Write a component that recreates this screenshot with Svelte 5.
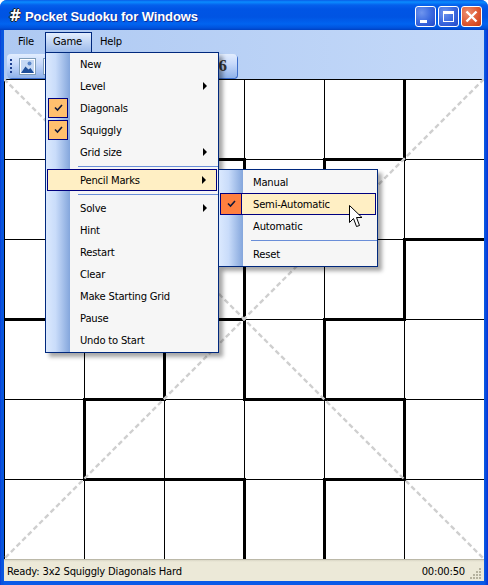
<script lang="ts">
  const cell = 80;
  const size = 480;

  // thick segments of the squiggly regions: [x1, y1, x2, y2] in grid units
  const thick = [
    [0, 3, 3, 3], [4, 3, 4, 4], [3, 3, 3, 4], [2, 3, 2, 4],
    [1, 4, 1, 5], [1, 4, 2, 4], [3, 4, 5, 4], [1, 5, 3, 5], [4, 5, 5, 5],
    [3, 5, 3, 6], [4, 5, 4, 6], [5, 4, 5, 5], [4, 3, 5, 3], [5, 2, 5, 3],
    [5, 2, 6, 2], [4, 1, 5, 1], [5, 0, 5, 1], [4, 1, 4, 2], [3, 1, 3, 3],
    [2, 1, 3, 1]
  ];
  const steps = [0, 1, 2, 3, 4, 5, 6];

  const gameItems = [
    { label: 'New' },
    { label: 'Level', sub: true },
    { label: 'Diagonals', checked: true },
    { label: 'Squiggly', checked: true },
    { label: 'Grid size', sub: true },
    { sep: true },
    { label: 'Pencil Marks', sub: true, active: true },
    { sep: true },
    { label: 'Solve', sub: true },
    { label: 'Hint' },
    { label: 'Restart' },
    { label: 'Clear' },
    { label: 'Make Starting Grid' },
    { label: 'Pause' },
    { label: 'Undo to Start' }
  ];

  const pencilItems = [
    { label: 'Manual' },
    { label: 'Semi-Automatic', checked: true, active: true },
    { label: 'Automatic' },
    { sep: true },
    { label: 'Reset' }
  ];
</script>

<div class="window">
  <header class="titlebar">
    <span class="app-icon">#</span>
    <span class="app-title">Pocket Sudoku for Windows</span>
    <div class="controls">
      <button class="ctl" aria-label="Minimize"><span class="min-glyph"></span></button>
      <button class="ctl" aria-label="Maximize"><span class="max-glyph"></span></button>
      <button class="ctl ctl--close" aria-label="Close">
        <svg width="13" height="13" viewBox="0 0 13 13"><path d="M1.5 1.5l10 10M11.5 1.5l-10 10" stroke="#fff" stroke-width="2.4" /></svg>
      </button>
    </div>
  </header>

  <div class="client">
    <div class="bands">
      <nav class="menubar">
        <span class="top-item">File</span>
        <span class="top-item top-item--open">Game</span>
        <span class="top-item">Help</span>
      </nav>
      <div class="toolbar">
        <span class="grip"></span>
        <span class="tool-pic">
          <svg width="17" height="17" viewBox="0 0 17 17">
            <rect x="0.5" y="0.5" width="16" height="16" fill="#fff" stroke="#7f9db9" />
            <rect x="2" y="2" width="13" height="13" fill="#c5d8f4" />
            <circle cx="10.5" cy="5.5" r="2" fill="#5b86c8" />
            <path d="M2 15l4.5-6.5 3 3 2-1.500 3.500 5z" fill="#1f4f9a" />
          </svg>
        </span>
        <span class="tool-pic">
          <svg width="17" height="17" viewBox="0 0 17 17"><rect x="0.5" y="0.5" width="16" height="16" fill="#fff" stroke="#7f9db9" /></svg>
        </span>
        <span class="tool-num">6</span>
      </div>
    </div>

    <svg class="board" width={size} height={size + 1} viewBox="0 0 {size} {size + 1}">
      <rect width={size} height={size + 1} fill="#fff" />
      {#each steps as n}
        <line x1={n * cell + 0.5} y1="0" x2={n * cell + 0.5} y2={size} stroke="#000" />
        <line x1="0" y1={n * cell + 0.5} x2={size} y2={n * cell + 0.5} stroke="#000" />
      {/each}
      {#each thick as t}
        <line
          x1={t[0] * cell + 0.5 - (t[1] === t[3] ? 1.5 : 0)}
          y1={t[1] * cell + 0.5 - (t[0] === t[2] ? 1.5 : 0)}
          x2={t[2] * cell + 0.5 + (t[1] === t[3] ? 1.5 : 0)}
          y2={t[3] * cell + 0.5 + (t[0] === t[2] ? 1.5 : 0)}
          stroke="#000"
          stroke-width="3"
        />
      {/each}
      <line x1="0" y1="0" x2={size} y2={size} class="diag" />
      <line x1={size} y1="0" x2="0" y2={size} class="diag" />
    </svg>

    <footer class="statusbar">
      <span>Ready: 3x2 Squiggly Diagonals Hard</span>
      <span class="timer">00:00:50</span>
      <svg class="size-grip" width="12" height="12" viewBox="0 0 12 12" fill="#b5b29f">
        <rect x="9" y="1" width="2" height="2" />
        <rect x="6" y="4" width="2" height="2" /><rect x="9" y="4" width="2" height="2" />
        <rect x="3" y="7" width="2" height="2" /><rect x="6" y="7" width="2" height="2" /><rect x="9" y="7" width="2" height="2" />
        <rect x="0" y="10" width="2" height="2" /><rect x="3" y="10" width="2" height="2" /><rect x="6" y="10" width="2" height="2" /><rect x="9" y="10" width="2" height="2" />
      </svg>
    </footer>
  </div>

  <ul class="menu menu--game">
    {#each gameItems as item}
      {#if item.sep}
        <li class="sep"></li>
      {:else}
        <li class="item" class:active={item.active}>
          {#if item.checked}
            <span class="check"><svg width="9" height="8" viewBox="0 0 9 8"><path d="M1 3.500l2.500 2.500 4.500-5" fill="none" stroke="#10183a" stroke-width="1.600" /></svg></span>
          {/if}
          <span class="label">{item.label}</span>
          {#if item.sub}<span class="arrow"></span>{/if}
        </li>
      {/if}
    {/each}
  </ul>

  <ul class="menu menu--pencil">
    {#each pencilItems as item}
      {#if item.sep}
        <li class="sep"></li>
      {:else}
        <li class="item" class:active={item.active}>
          {#if item.checked}
            <span class="check check--on"><svg width="9" height="8" viewBox="0 0 9 8"><path d="M1 3.500l2.500 2.500 4.500-5" fill="none" stroke="#10183a" stroke-width="1.600" /></svg></span>
          {/if}
          <span class="label">{item.label}</span>
        </li>
      {/if}
    {/each}
  </ul>

  <svg class="cursor" width="13" height="23" viewBox="0 0 13 23">
    <path d="M0.500 0.500v17l4-4 3 8 3-1-3-8h5.500z" fill="#fff" stroke="#000" />
  </svg>
</div>

<style>
  :global(body) {
    background: #fff;
  }

  .window {
    position: relative;
    width: 488px;
    height: 585px;
    box-sizing: border-box;
    display: flex;
    flex-direction: column;
    overflow: hidden;
    border-radius: 7px 7px 0 0;
    background: linear-gradient(90deg, #0831d9 0, #0855dd 1px, #0855dd 3px, #0a5ae8 4px, #0a5ae8 484px, #0855dd 485px, #0831d9 488px);
    font-family: "DejaVu Sans", sans-serif;
    font-size: 10px;
    letter-spacing: -0.2px;
    color: #000;
  }

  .titlebar {
    height: 30px;
    flex-shrink: 0;
    display: flex;
    align-items: center;
    padding: 2px 6px 0 9px;
    box-sizing: border-box;
    background: linear-gradient(180deg, #0a5ce6 0, #0a8cff 2px, #0560ec 5px, #0055e5 9px, #0054e3 17px, #0164f0 24px, #0052dc 28px, #0041c0 30px);
  }

  .app-icon {
    width: 16px;
    font: 700 15px "DejaVu Sans", sans-serif;
    letter-spacing: 0;
    color: #fff;
    text-shadow: 1px 0 0 #222, -1px 0 0 #222, 0 1px 0 #222, 0 -1px 0 #222;
  }

  .app-title {
    flex: 1;
    padding-top: 1px;
    font: 700 13px "Liberation Sans", sans-serif;
    letter-spacing: -0.1px;
    color: #fff;
    text-shadow: 1px 1px 0 #0f2f9a;
    white-space: nowrap;
  }

  .controls {
    display: flex;
    gap: 2px;
  }

  .ctl {
    width: 21px;
    height: 21px;
    box-sizing: border-box;
    padding: 0;
    display: flex;
    align-items: center;
    justify-content: center;
    border: 1px solid #fff;
    border-radius: 3px;
    background: radial-gradient(circle at 30% 30%, #6f95ee 0, #3c6be0 50%, #2348c8 100%);
    position: relative;
  }

  .ctl--close {
    background: radial-gradient(circle at 30% 30%, #eb8f72 0, #df5a34 55%, #c53a14 100%);
  }

  .min-glyph {
    width: 7px;
    height: 3px;
    background: #fff;
    align-self: flex-end;
    margin: 0 4px 3px 0;
  }

  .max-glyph {
    width: 11px;
    height: 11px;
    box-sizing: border-box;
    border: 1px solid #fff;
    border-top-width: 3px;
  }

  .client {
    flex: 1;
    min-height: 0;
    display: flex;
    flex-direction: column;
    margin: 0 4px 4px;
  }

  .bands {
    height: 49px;
    flex-shrink: 0;
    display: flex;
    flex-direction: column;
    background: linear-gradient(90deg, #aec9f2, #c4d9f9);
  }

  .menubar {
    height: 22px;
    display: flex;
    padding: 2px 0 0 2px;
    box-sizing: border-box;
  }

  .top-item {
    height: 20px;
    box-sizing: border-box;
    padding: 0 7px;
    line-height: 18px;
    border: 1px solid transparent;
  }

  .top-item:first-child {
    width: 39px;
    padding: 0 0 0 11px;
  }

  .top-item--open {
    width: 47px;
    padding: 0 0 0 7px;
    border-color: #00287d;
    border-bottom: none;
    background: linear-gradient(180deg, #e3eefe, #9cbaea);
  }

  .top-item--open + .top-item {
    padding-left: 7px;
  }

  .toolbar {
    width: 230px;
    height: 24px;
    margin: 2px 0 0 3px;
    display: flex;
    align-items: center;
    padding-left: 3px;
    box-sizing: border-box;
    border-radius: 4px;
    background: linear-gradient(180deg, #e2edfe 0, #c8dafb 40%, #8fb2ea 100%);
    box-shadow: 1px 1px 0 #3d6ecb;
  }

  .grip {
    width: 2px;
    height: 14px;
    background: repeating-linear-gradient(180deg, #1d3f8f 0 2px, transparent 2px 4px);
    margin-right: 7px;
  }

  .tool-pic {
    width: 17px;
    height: 17px;
    margin-right: 7px;
  }

  .tool-num {
    margin-left: auto;
    margin-right: 10px;
    font: 700 17px "Liberation Serif", serif;
    letter-spacing: 0;
    color: #333;
  }

  .board {
    display: block;
    flex-shrink: 0;
    margin-bottom: -1px;
  }

  .diag {
    stroke: #cfcfcf;
    stroke-width: 2.4;
    stroke-dasharray: 5 3;
  }

  .statusbar {
    flex: 1;
    position: relative;
    display: flex;
    align-items: center;
    justify-content: space-between;
    padding: 2px 18px 0 3px;
    background: linear-gradient(180deg, #9d9a8a 0, #dad7c6 1px, #ece9d8 3px, #ece9d8 100%);
  }

  .timer {
    margin-right: 1px;
  }

  .size-grip {
    position: absolute;
    right: 2px;
    bottom: 2px;
  }

  .menu {
    position: absolute;
    list-style: none;
    margin: 0;
    padding: 0;
    box-sizing: border-box;
    border: 1px solid #00287d;
    background-color: #f6f6f6;
    background-image: linear-gradient(90deg, #dbe9fe 0, #c9dcfa 40%, #84a6dc 100%);
    background-repeat: no-repeat;
    background-size: 24px 100%;
    box-shadow: 4px 4px 4px rgba(0, 0, 0, 0.35);
  }

  .menu--game {
    left: 45px;
    top: 52px;
    width: 174px;
    height: 301px;
  }

  .menu--pencil {
    left: 218px;
    top: 169px;
    width: 160px;
    height: 98px;
    padding-top: 1px;
  }

  .item {
    position: relative;
    height: 22px;
    display: flex;
    align-items: center;
    box-sizing: border-box;
    padding-left: 34px;
    white-space: nowrap;
  }

  .item.active {
    margin: 0 1px;
    padding-left: 32px;
    border: 1px solid #000080;
    background: #ffefc4;
  }

  .check {
    position: absolute;
    left: 2px;
    top: 1px;
    width: 20px;
    height: 20px;
    box-sizing: border-box;
    display: flex;
    align-items: center;
    justify-content: center;
    border: 1px solid #000080;
    background: #ffc06e;
  }

  .check--on {
    left: -1px;
    top: -1px;
    width: 22px;
    height: 22px;
    background: #ff7f3f;
  }

  .arrow {
    position: absolute;
    right: 11px;
    top: 7px;
    border-left: 4px solid #000;
    border-top: 4px solid transparent;
    border-bottom: 4px solid transparent;
  }

  .item.active .arrow {
    top: 6px;
    right: 10px;
  }

  .sep {
    height: 6px;
    position: relative;
    box-sizing: border-box;
    padding-top: 2px;
    margin-left: 32px;
    background: linear-gradient(#6a8ed8, #6a8ed8) 0 3px / 100% 1px no-repeat;
  }

  .cursor {
    position: absolute;
    left: 349px;
    top: 205px;
  }
</style>
